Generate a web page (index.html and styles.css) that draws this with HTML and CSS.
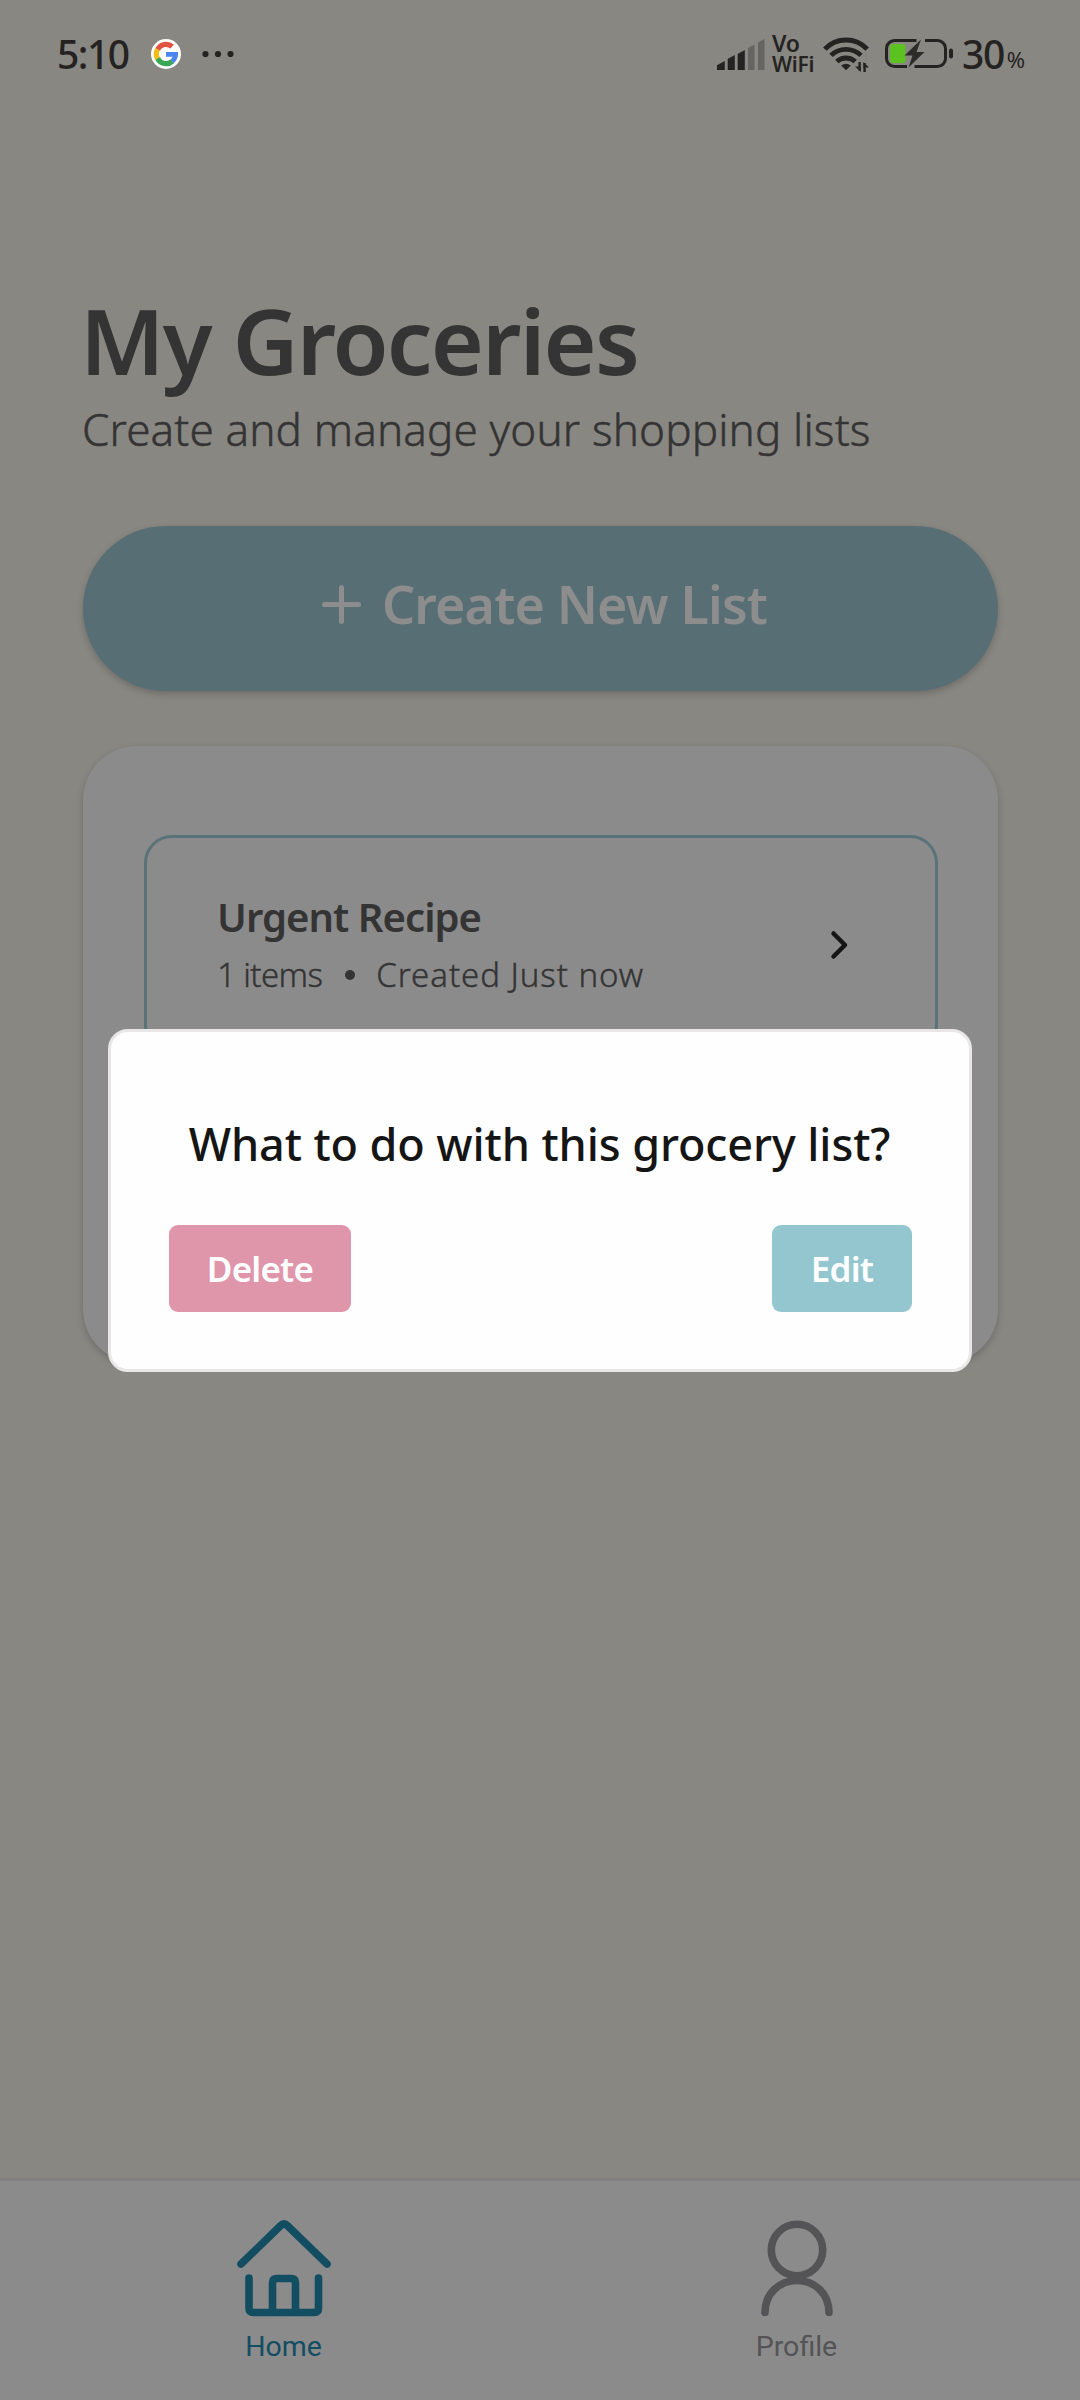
FILE: index.html
```html
<!DOCTYPE html>
<html lang="en">
<head>
<meta charset="utf-8">
<title>My Groceries</title>
<link rel="stylesheet" href="styles.css">
</head>
<body>
<div class="app">
  <header class="status">
    <div class="status-left">
      <span class="clock">5:10</span>
      <svg class="google" width="30" height="30" viewBox="0 0 30 30" fill="none">
        <circle cx="15" cy="15" r="15" fill="#fff"/>
        <g stroke-width="5.2">
          <path d="M21.2 7.6A9.6 9.6 0 0 0 6.6 10.4" stroke="#e25241"/>
          <path d="M6.6 10.2A9.6 9.6 0 0 0 6.6 19.8" stroke="#f5bb17"/>
          <path d="M6.6 19.6A9.6 9.6 0 0 0 21.4 22.2" stroke="#3aa757"/>
          <path d="M21.2 22.4A9.6 9.6 0 0 0 24.6 15.4H15" stroke="#4a86ed" stroke-width="4.8"/>
        </g>
      </svg>
      <svg class="more" width="32" height="8" viewBox="0 0 32 8" fill="#242321"><circle cx="3.500" cy="4" r="3.1"/><circle cx="16" cy="4" r="3.1"/><circle cx="28.500" cy="4" r="3.1"/></svg>
    </div>
    <div class="status-right">
      <svg width="48" height="31" viewBox="0 0 48 31" fill="#242321">
        <path d="M0 31V26.500L7.500 22.500V31ZM11 31V20L17.500 16.500V31ZM21 31V15L27.500 11.500V31Z" stroke="#242321" stroke-width=".6" stroke-linejoin="round"/>
        <path d="M31 31V9L37.500 5.500V31ZM41 31V3.500L47.500 0V31Z" fill="#666561"/>
      </svg>
      <div class="vowifi"><span class="vo">Vo</span><span class="wf">WiFi</span></div>
      <svg class="wifi" width="47" height="36" viewBox="0 0 47 36" fill="none" stroke="#242321" stroke-width="4.800">
        <path d="M1.800 13.200A29 29 0 0 1 44.200 13.200"/>
        <path d="M8 19.400A21.500 21.500 0 0 1 38 19.400"/>
        <path d="M13.800 25.600A13.500 13.500 0 0 1 32.200 25.600"/>
        <path d="M18.200 29.600Q23 25.800 27.800 29.600L23 34.200Z" fill="#242321" stroke="none"/>
        <path d="M36.600 26V34.500M41.600 36V27" stroke-width="2.400"/>
        <path d="M32 30.500H37.800V36ZM40.400 26V31.500H46Z" fill="#242321" stroke="none"/>
      </svg>
      <svg class="battery" width="69" height="32" viewBox="0 0 69 32" fill="none">
        <rect x="6" y="6" width="15.500" height="19" rx="3" fill="#5cc21f"/>
        <path d="M32.500 2.500H10.500A8 8 0 0 0 2.500 10.500V20.500A8 8 0 0 0 10.500 28.500H23M41 2.500H53.500A8 8 0 0 1 61.500 10.500V20.500A8 8 0 0 1 53.500 28.500H30.500" stroke="#242321" stroke-width="3"/>
        <path d="M37 1.500L20.500 17.500H28.500L24.500 29.500L40.500 14H32.500Z" fill="#2c2b29"/>
        <rect x="65" y="10.500" width="4" height="10" rx="2" fill="#242321"/>
      </svg>
      <span class="level">30</span><span class="pct">%</span>
    </div>
  </header>

  <main class="content">
    <h1>My Groceries</h1>
    <p class="sub">Create and manage your shopping lists</p>
    <button class="create">
      <svg width="39" height="39" viewBox="0 0 39 39" fill="none" stroke="#8d8d8d" stroke-width="5" stroke-linecap="round"><path d="M19.500 2.500V36.500M2.500 19.500H36.500"/></svg>
      <span>Create New List</span>
    </button>
    <section class="card">
      <article class="item">
        <div>
          <h2>Urgent Recipe</h2>
          <p class="meta"><span class="count">1 items</span><i class="dot"></i><span class="made">Created Just now</span></p>
        </div>
        <svg class="chev" width="20" height="32" viewBox="0 0 20 32" fill="none" stroke="#151515" stroke-width="4.500" stroke-linecap="round" stroke-linejoin="round"><path d="M4.500 4.500L16 16L4.500 27.500"/></svg>
      </article>
    </section>
  </main>

  <nav class="tabs">
    <a class="tab active">
      <svg width="96" height="98" viewBox="0 0 96 98" fill="none" stroke="#134d62" stroke-width="7.600" stroke-linecap="round" stroke-linejoin="round">
        <path d="M5 44L45 5.300Q48 2.600 51 5.300L91 44"/>
        <path d="M13 58V88Q13 92.500 17.500 92.500H78Q82.500 92.500 82.500 88V58"/>
        <path d="M36.500 92V63Q36.500 58.500 41 58.500H55Q59.500 58.500 59.500 63V92"/>
      </svg>
      <span>Home</span>
    </a>
    <a class="tab">
      <svg width="96" height="98" viewBox="0 0 96 98" fill="none" stroke="#545456" stroke-width="7.600" stroke-linecap="round">
        <circle cx="48" cy="30" r="25.700"/>
        <path d="M16 92.500C16 74 30 60.500 48 60.500S80 74 80 92.500"/>
      </svg>
      <span>Profile</span>
    </a>
  </nav>

  <div class="dialog" role="dialog">
    <h3>What to do with this grocery list?</h3>
    <div class="actions">
      <button class="btn delete">Delete</button>
      <button class="btn edit">Edit</button>
    </div>
  </div>
</div>
</body>
</html>
```
FILE: styles.css
```css
* { box-sizing: border-box; margin: 0; padding: 0; }

body {
  width: 1080px;
  height: 2400px;
  font-family: "Noto Sans", sans-serif;
  color: #343434;
}

button { border: 0; font: inherit; color: inherit; }

.app {
  position: relative;
  display: flex;
  flex-direction: column;
  width: 1080px;
  height: 2400px;
  background: #898782;
  overflow: hidden;
}

/* status bar */
.status {
  display: flex;
  justify-content: space-between;
  height: 108px;
  padding: 0 55px 0 57px;
  color: #242321;
}
.status-left, .status-right { display: flex; align-items: center; }
.clock { font-size: 39px; font-weight: 500; letter-spacing: -1.5px; line-height: 108px; }
.google { margin-left: 22px; }
.more { margin-left: 21px; }
.vowifi {
  display: flex;
  flex-direction: column;
  margin-left: 7px;
  font-size: 21px;
  font-weight: 600;
  line-height: 21px;
  letter-spacing: -.3px;
}
.vo { font-size: 23px; }
.wifi { margin-left: 9px; }
.battery { margin-left: 14px; }
.level { margin-left: 9px; font-size: 39px; font-weight: 500; letter-spacing: -1.5px; line-height: 108px; }
.pct { margin-left: 3px; font-size: 22px; line-height: 30px; padding-top: 10px; }

/* page content */
.content { flex: 1; padding: 186px 82px 0 83px; }
h1 { font-size: 91px; font-weight: 600; line-height: 92px; letter-spacing: -1.85px; margin-left: -3px; }
.sub {
  font-size: 44px;
  font-weight: 300;
  -webkit-text-stroke: .5px;
  line-height: 60px;
  letter-spacing: .15px;
  margin: 13px 0 0 -1px;
}
.create {
  display: flex;
  align-items: center;
  justify-content: center;
  gap: 21px;
  width: 915px;
  height: 165px;
  margin-top: 67px;
  padding: 0 0 9px 8px;
  border-radius: 83px;
  background: #576f74;
  color: #8d8d8d;
  font-size: 52px;
  font-weight: 600;
  letter-spacing: -.85px;
  box-shadow: 0 3px 7px rgba(0, 0, 0, .2);
}
.create span { margin-top: -2px; }
.card {
  height: 617px;
  margin-top: 55px;
  padding: 89px 60px 0 61px;
  border-radius: 54px;
  background: #8b8b8b;
  box-shadow: 0 3px 7px rgba(0, 0, 0, .2);
}
.item {
  display: flex;
  justify-content: space-between;
  align-items: center;
  height: 218px;
  padding: 0 86px 0 70px;
  border: 3px solid #5a7379;
  border-radius: 28px;
}
.chev { margin-top: 2px; }
h2 { font-size: 40px; font-weight: 600; line-height: 54px; letter-spacing: -.95px; }
.meta {
  display: flex;
  align-items: center;
  font-size: 33px;
  font-weight: 300;
  -webkit-text-stroke: .4px;
  line-height: 48px;
  margin-top: 7px;
}
.count { letter-spacing: -.6px; }
.made { letter-spacing: .94px; }
.dot { width: 10px; height: 10px; margin: 0 21px 0 23px; border-radius: 50%; background: #343434; }

/* bottom tabs */
.tabs {
  display: flex;
  height: 222px;
  padding: 39px 27px 0;
  border-top: 3px solid #817f80;
  background: #8b8b8b;
}
.tab {
  flex: 1;
  display: flex;
  flex-direction: column;
  align-items: center;
  color: #545456;
  font: 400 28.5px/34px Roboto, sans-serif;
}
.tab span { margin-top: 12px; }
.active { color: #134d62; }

/* dialog floating over the page */
.dialog {
  position: absolute;
  left: 108px;
  top: 1029px;
  width: 864px;
  height: 343px;
  padding: 82px 57px 0 58px;
  border: 3px solid #e8e6e7;
  border-radius: 20px;
  background: #fefefe;
}
h3 { font-size: 45px; font-weight: 500; line-height: 60px; letter-spacing: -.1px; color: #151515; text-align: center; white-space: nowrap; margin-left: -2px; }
.actions { display: flex; justify-content: space-between; margin-top: 51px; }
.btn {
  height: 87px;
  border-radius: 9px;
  color: #fff;
  font-size: 35px;
  font-weight: 600;
  letter-spacing: -.8px;
}
.delete { width: 182px; background: #df95aa; }
.edit { width: 140px; background: #93c6cf; }
```
